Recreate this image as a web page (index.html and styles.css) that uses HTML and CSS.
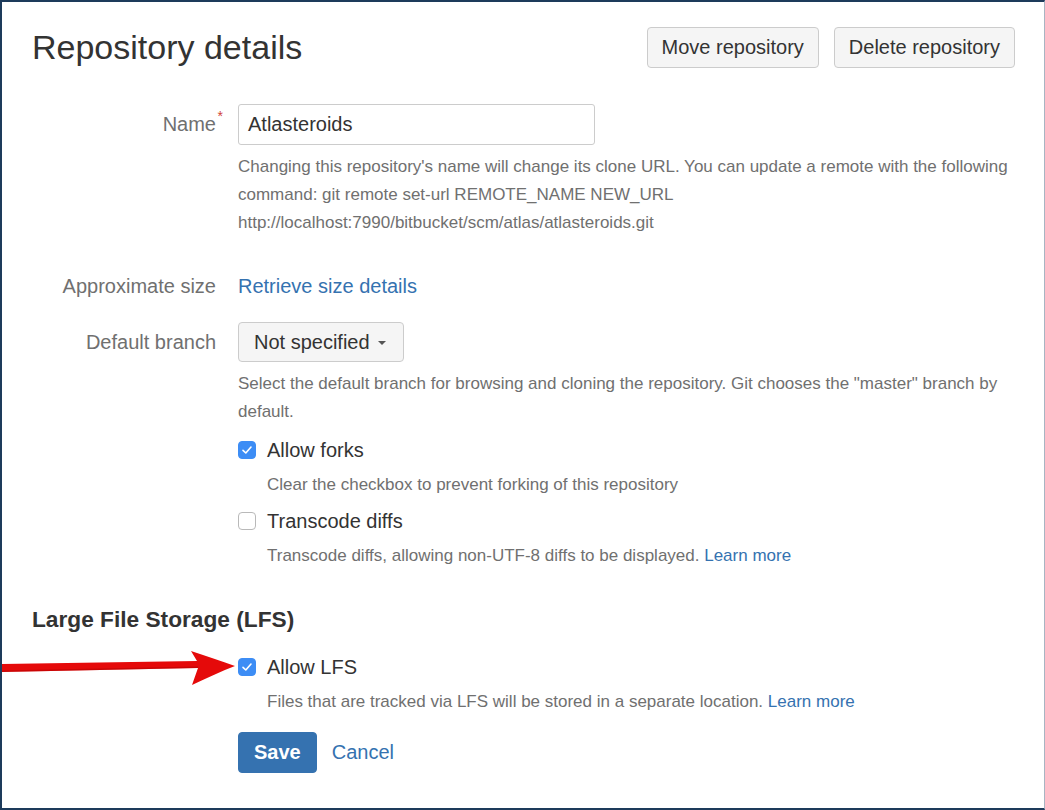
FILE: index.html
```html
<!DOCTYPE html>
<html>
<head>
<meta charset="utf-8">
<link rel="stylesheet" href="styles.css">
</head>
<body>
<div class="frame">
  <div class="header">
    <h1 class="title">Repository details</h1>
    <div class="actions">
      <button class="btn">Move repository</button>
      <button class="btn">Delete repository</button>
    </div>
  </div>

  <form class="form">
    <div class="row row-name">
      <label class="label">Name<span class="req">*</span></label>
      <div class="field">
        <div class="input">Atlasteroids</div>
        <div class="help help-top">Changing this repository's name will change its clone URL. You can update a remote with the following command: git remote set-url REMOTE_NAME NEW_URL http://localhost:7990/bitbucket/scm/atlas/atlasteroids.git</div>
      </div>
    </div>

    <div class="row row-size">
      <label class="label">Approximate size</label>
      <div class="field"><a class="link">Retrieve size details</a></div>
    </div>

    <div class="row row-branch">
      <label class="label label-btn">Default branch</label>
      <div class="field">
        <div class="select">Not specified<span class="caret"></span></div>
        <div class="help help-top">Select the default branch for browsing and cloning the repository. Git chooses the "master" branch by default.</div>
        <div class="check check-forks"><span class="box checked"><svg viewBox="0 0 18 18" width="18" height="18"><path d="M5 9.3 L7.8 12 L13 6" fill="none" stroke="#fff" stroke-width="1.6" stroke-linecap="round" stroke-linejoin="round"/></svg></span><span class="check-label">Allow forks</span></div>
        <div class="help help-indent">Clear the checkbox to prevent forking of this repository</div>
        <div class="check check-trans"><span class="box"></span><span class="check-label">Transcode diffs</span></div>
        <div class="help help-indent">Transcode diffs, allowing non-UTF-8 diffs to be displayed. <a class="link">Learn more</a></div>
      </div>
    </div>

    <h3 class="section">Large File Storage (LFS)</h3>

    <div class="row row-lfs">
      <div class="label"></div>
      <div class="field">
        <div class="check"><span class="box checked"><svg viewBox="0 0 18 18" width="18" height="18"><path d="M5 9.3 L7.8 12 L13 6" fill="none" stroke="#fff" stroke-width="1.6" stroke-linecap="round" stroke-linejoin="round"/></svg></span><span class="check-label">Allow LFS</span></div>
        <div class="help help-indent">Files that are tracked via LFS will be stored in a separate location. <a class="link">Learn more</a></div>
        <div class="buttons">
          <button type="button" class="btn-primary">Save</button>
          <a class="link cancel">Cancel</a>
        </div>
      </div>
    </div>
  </form>

  <svg class="arrow" width="240" height="40" viewBox="0 0 240 40">
    <path d="M0 14 L197 11 L191 1 C206 6 221 11 235 16 C222 21 207 28 192 35 L198 18 L0 22 Z" fill="#e50a0a"/>
    <path d="M0 20.5 L198 16.5 L198 18 L0 22 Z" fill="#a80000" opacity="0.45"/>
  </svg>
</div>
</body>
</html>
```

FILE: styles.css
```css
* { box-sizing: border-box; }
html, body { margin: 0; padding: 0; background: #fff; }
body {
  font-family: "Liberation Sans", Arial, Helvetica, sans-serif;
  color: #333;
}
.frame {
  position: relative;
  width: 1045px;
  height: 810px;
  border-top: 2px solid #1d3b5b;
  border-left: 2px solid #1d3b5b;
  border-bottom: 2px solid #1d3b5b;
  border-right: 1px solid #a8b4c2;
  padding: 25px 29px 0 30px;
  overflow: hidden;
}
.header {
  display: flex;
  justify-content: space-between;
  align-items: center;
  height: 41px;
}
.title {
  margin: 0;
  font-size: 34px;
  font-weight: normal;
  line-height: 41px;
  color: #333;
}
.actions { display: flex; gap: 15px; }
.btn {
  font-family: inherit;
  font-size: 20px;
  color: #333;
  height: 41px;
  padding: 0 14px;
  background: #f5f5f5;
  border: 1px solid #ccc;
  border-radius: 4px;
}
.form { margin-top: 36px; }
.row {
  display: grid;
  grid-template-columns: 184px 1fr;
  column-gap: 22px;
}
.label {
  text-align: right;
  font-size: 20px;
  color: #707070;
  line-height: 41px;
  position: relative;
}
.req {
  color: #d04437;
  font-size: 14px;
  position: absolute;
  right: -7px;
  top: -8px;
}
.field { min-width: 0; }
.input {
  width: 357px;
  height: 41px;
  border: 1px solid #ccc;
  border-radius: 3px;
  padding-left: 9px;
  font-size: 20px;
  line-height: 39px;
  color: #333;
}
.help {
  font-size: 17px;
  line-height: 28px;
  color: #707070;
}
.help-top { margin-top: 8px; }
.help-indent { margin-left: 29px; margin-top: 7px; }
.link { color: #3572b0; text-decoration: none; }
.row-size { margin-top: 35px; }
.row-size .label, .row-size .field { line-height: 28px; font-size: 20px; }
.row-branch { margin-top: 22px; }
.label-btn { line-height: 40px; }
.select {
  display: inline-flex;
  align-items: center;
  height: 40px;
  padding: 0 17px 0 15px;
  background: #f5f5f5;
  border: 1px solid #ccc;
  border-radius: 4px;
  font-size: 20px;
  color: #333;
}
.caret {
  display: inline-block;
  width: 0;
  height: 0;
  margin-left: 8px;
  margin-top: 2px;
  border-left: 4px solid transparent;
  border-right: 4px solid transparent;
  border-top: 4px solid #555;
}
.check {
  display: flex;
  align-items: center;
  height: 28px;
  font-size: 20px;
  color: #333;
}
.check-forks { margin-top: 10px; }
.check-trans { margin-top: 8px; }
.box {
  width: 18px;
  height: 18px;
  border-radius: 4px;
  border: 1px solid #b9b9b9;
  background: #fff;
  margin-right: 11px;
  flex: none;
  display: flex;
}
.box.checked {
  background: #3d8df5;
  border-color: #3d8df5;
}
.box svg { margin: -1px; }
.section {
  margin: 33px 0 0 0;
  font-size: 22.7px;
  line-height: 32px;
  font-weight: bold;
  color: #333;
}
.row-lfs { margin-top: 18px; }
.buttons {
  display: flex;
  align-items: center;
  gap: 15px;
  margin-top: 16px;
}
.btn-primary {
  font-family: inherit;
  font-size: 20px;
  font-weight: bold;
  color: #fff;
  background: #3572b0;
  border: 1px solid #3572b0;
  border-radius: 4px;
  height: 41px;
  padding: 0 15px;
}
.cancel { font-size: 20px; }
.arrow {
  position: absolute;
  left: -2px;
  top: 648px;
}
```
